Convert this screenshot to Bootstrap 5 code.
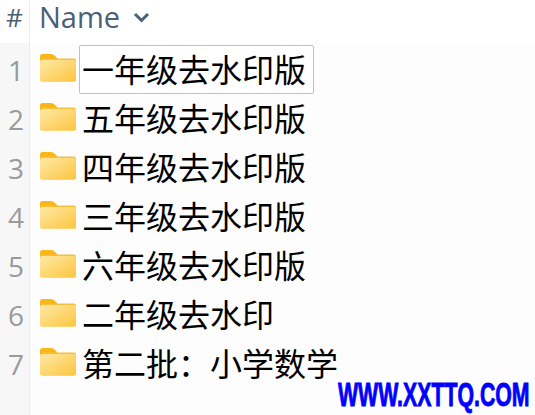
<!DOCTYPE html>
<html lang="zh"><head><meta charset="utf-8">
<link href="https://cdn.jsdelivr.net/npm/bootstrap@5.3.0/dist/css/bootstrap.min.css" rel="stylesheet">
<style>
html,body{height:415px;overflow:hidden;background:#fdfdfd}
.shell{height:415px;position:relative;overflow:hidden}
.topbar{height:43px;background:#fff}
.hash{width:30px;font:26px/35px "Open Sans",sans-serif;color:#4a6076;border-right:1px solid #ececec;text-align:center}
.namehead{font:29px/34px "Open Sans",sans-serif;color:#4a6076;padding-left:9px;padding-bottom:9px;gap:13px}
.gutter{width:30px;background:#f7f7f7;border-right:1px solid #ececec;height:372px;flex:none}
.num{height:49px;font:28px/49px "Open Sans",sans-serif;color:#9a9a9a;text-align:right;padding-right:5px}
.gutter .num:first-child{margin-top:3px}
.fname{height:49px;padding-left:10px;gap:3px;font:32px/1 "Noto Sans CJK SC",sans-serif;color:#000}
.fname:first-child{margin-top:3px}
.fname svg{flex:none;margin-top:-5px}
.fname span{padding:0 0 6px 2px;border:1px solid transparent}
.fname span.sel{border-color:#9ccaf0;border-radius:2px;padding:0 7px 2px 2px;height:49px;margin-top:-2px;line-height:45px;background:#fff}
.mark-wm{position:absolute;left:338px;top:378px;font:700 33px/33px "Liberation Sans",sans-serif;color:#0000ff;-webkit-text-stroke:.9px #0000ff;transform:scaleX(.645);transform-origin:0 0;white-space:nowrap}
</style></head><body>
<svg width="0" height="0" class="position-absolute"><defs>
<linearGradient id="fg" x1="0" y1="0" x2="1" y2="1"><stop offset="0" stop-color="#ffe8a6"/><stop offset="1" stop-color="#fcc63f"/></linearGradient>
<symbol id="fold" viewBox="0 0 36 28"><path d="M0 2.500Q0 0 2.500 0H11Q13 0 14.500 1.500L17 4V8H0Z" fill="#fbb514"/><path d="M0 7Q0 5 2 4.500L14 4.500H34Q36 4.500 36 6.500V25.500Q36 27.500 34 27.500H2Q0 27.500 0 25.500Z" fill="#f5bf3c"/><path d="M0 8.500Q0 6 2 6H34Q36 6 36 8V25.500Q36 27.500 34 27.500H2Q0 27.500 0 25.500Z" fill="url(#fg)"/></symbol>
</defs></svg>
<div class="shell">
<div class="topbar d-flex">
<div class="hash">#</div>
<div class="namehead d-flex align-items-center">Name
<svg width="17" height="11" viewBox="0 0 17 11"><path d="M2 2L8.500 8.500L15 2" fill="none" stroke="#4a6076" stroke-width="3"/></svg></div>
</div>
<div class="d-flex">
<div class="gutter"><div class="num">1</div><div class="num">2</div><div class="num">3</div><div class="num">4</div><div class="num">5</div><div class="num">6</div><div class="num">7</div></div>
<div class="flex-grow-1">
<div class="fname d-flex align-items-center"><svg width="36" height="28"><use href="#fold"/></svg><span class="sel">一年级去水印版</span></div>
<div class="fname d-flex align-items-center"><svg width="36" height="28"><use href="#fold"/></svg><span>五年级去水印版</span></div>
<div class="fname d-flex align-items-center"><svg width="36" height="28"><use href="#fold"/></svg><span>四年级去水印版</span></div>
<div class="fname d-flex align-items-center"><svg width="36" height="28"><use href="#fold"/></svg><span>三年级去水印版</span></div>
<div class="fname d-flex align-items-center"><svg width="36" height="28"><use href="#fold"/></svg><span>六年级去水印版</span></div>
<div class="fname d-flex align-items-center"><svg width="36" height="28"><use href="#fold"/></svg><span>二年级去水印</span></div>
<div class="fname d-flex align-items-center"><svg width="36" height="28"><use href="#fold"/></svg><span>第二批：小学数学</span></div>
</div>
</div>
<div class="mark-wm">WWW.XXTTQ.COM</div>
</div>
<script src="https://cdn.jsdelivr.net/npm/bootstrap@5.3.0/dist/js/bootstrap.bundle.min.js"></script>
</body></html>
